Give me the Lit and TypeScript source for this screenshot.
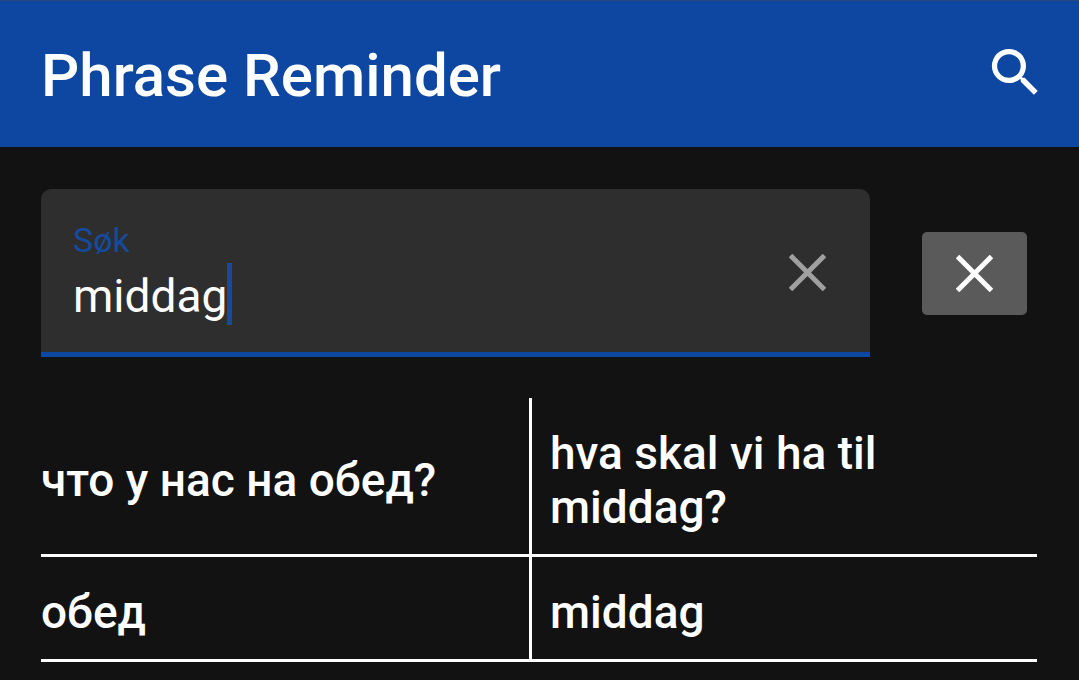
import { LitElement, html, css, svg } from "lit";
import { customElement, property, state } from "lit/decorators.js";

interface Phrase {
  source: string;
  target: string;
}

const crossIcon = svg`<path d="M1.5 1.5 L35.5 35.5 M35.5 1.5 L1.5 35.5" fill="none" stroke="currentColor" stroke-width="5" />`;

@customElement("app-bar")
class AppBar extends LitElement {
  static styles = css`
    :host {
      display: block;
    }
    .bar {
      display: flex;
      align-items: center;
      justify-content: space-between;
      box-sizing: border-box;
      min-height: 147px;
      padding: 0 32px 4px 41px;
      border-top: 1px solid #244b7c;
      background: #0d47a1;
      color: #fff;
    }
    .title {
      margin: 0;
      padding-top: 8px;
      font-size: 60px;
      font-weight: 500;
      line-height: 70px;
    }
    .action {
      display: flex;
      padding: 0;
      border: 0;
      background: none;
      color: inherit;
      cursor: pointer;
    }
    .icon {
      width: 63px;
      height: 63px;
      fill: currentColor;
    }
  `;

  @property() heading = "";

  render() {
    return html`
      <header class="bar">
        <h1 class="title">${this.heading}</h1>
        <button class="action" type="button" aria-label="Søk">
          <svg class="icon" viewBox="0 0 24 24" aria-hidden="true">
            <path
              d="M15.5 14h-.79l-.28-.27A6.471 6.471 0 0 0 16 9.5 6.5 6.5 0 1 0 9.5 16c1.61 0 3.09-.59 4.23-1.57l.27.28v.79l5 4.99L20.49 19l-4.99-5zm-6 0C7.01 14 5 11.99 5 9.5S7.01 5 9.5 5 14 7.01 14 9.5 11.99 14 9.5 14z"
            />
          </svg>
        </button>
      </header>
    `;
  }
}

@customElement("search-field")
class SearchField extends LitElement {
  static styles = css`
    :host {
      display: block;
    }
    .field {
      display: flex;
      align-items: center;
      justify-content: space-between;
      padding: 31px 44px 27px 32px;
      border-bottom: 5px solid #0d47a1;
      border-radius: 10px 10px 0 0;
      background: #2e2e2e;
    }
    .entry {
      display: flex;
      flex-direction: column;
      gap: 3px;
      min-width: 0;
    }
    .label {
      color: #164a9c;
      font-size: 34px;
      line-height: 40px;
    }
    .line {
      display: flex;
    }
    .input {
      field-sizing: content;
      box-sizing: border-box;
      min-width: 1px;
      height: 62px;
      padding: 4px 0 0;
      border: 0;
      outline: 0;
      background: none;
      color: #fff;
      font: inherit;
      font-size: 46px;
      line-height: 58px;
      caret-color: transparent;
    }
    .caret {
      width: 5px;
      background: #164a9c;
    }
    .clear {
      display: flex;
      padding: 0;
      border: 0;
      background: none;
      color: #a0a0a0;
      cursor: pointer;
    }
    .icon {
      width: 37px;
      height: 37px;
    }
  `;

  @property() value = "";

  private emitQuery(value: string) {
    this.dispatchEvent(new CustomEvent("query", { detail: value }));
  }

  render() {
    return html`
      <div class="field">
        <div class="entry">
          <label class="label" for="query">Søk</label>
          <div class="line">
            <input
              class="input"
              id="query"
              type="text"
              autocomplete="off"
              .value=${this.value}
              @input=${(e: Event) => this.emitQuery((e.target as HTMLInputElement).value)}
            />
            <span class="caret"></span>
          </div>
        </div>
        <button class="clear" type="button" aria-label="Tøm" @click=${() => this.emitQuery("")}>
          <svg class="icon" viewBox="0 0 37 37" aria-hidden="true">${crossIcon}</svg>
        </button>
      </div>
    `;
  }
}

@customElement("phrase-table")
class PhraseTable extends LitElement {
  static styles = css`
    :host {
      display: block;
    }
    .table {
      width: 100%;
      table-layout: fixed;
      border-spacing: 0;
      color: #fff;
      font-size: 46px;
      font-weight: 500;
      line-height: 54px;
    }
    .cell {
      padding: 28px 0 20px;
      border-bottom: 3px solid #fff;
      vertical-align: middle;
      text-align: left;
    }
    .source {
      width: 49%;
      box-sizing: border-box;
    }
    .target {
      padding-left: 18px;
      border-left: 3px solid #fff;
    }
  `;

  @property({ attribute: false }) phrases: Phrase[] = [];

  render() {
    return html`
      <table class="table">
        <tbody>
          ${this.phrases.map(
            (p) => html`<tr>
              <td class="cell source">${p.source}</td>
              <td class="cell target">${p.target}</td>
            </tr>`
          )}
        </tbody>
      </table>
    `;
  }
}

@customElement("app-root")
class AppRoot extends LitElement {
  static styles = css`
    :host {
      display: block;
      min-height: 100vh;
      background: #121212;
      font-family: Roboto, "Noto Sans", sans-serif;
    }
    .content {
      display: flex;
      flex-direction: column;
      gap: 41px;
      padding: 42px 42px 18px 41px;
    }
    .search {
      display: flex;
      align-items: center;
      gap: 52px;
      padding-right: 10px;
    }
    .query {
      flex: 1;
      min-width: 0;
    }
    .close {
      display: flex;
      padding: 23px 34px;
      border: 0;
      border-radius: 5px;
      background: #5a5a5a;
      color: #fff;
      cursor: pointer;
    }
    .icon {
      width: 37px;
      height: 37px;
    }
  `;

  @state() private query = "middag";

  private phrases: Phrase[] = [
    { source: "что у нас на обед?", target: "hva skal vi ha til middag?" },
    { source: "обед", target: "middag" },
  ];

  render() {
    const found = this.phrases.filter((p) => (p.source + " " + p.target).includes(this.query));
    return html`
      <app-bar heading="Phrase Reminder"></app-bar>
      <main class="content">
        <div class="search">
          <search-field
            class="query"
            .value=${this.query}
            @query=${(e: CustomEvent<string>) => (this.query = e.detail)}
          ></search-field>
          <button class="close" type="button" aria-label="Lukk">
            <svg class="icon" viewBox="0 0 37 37" aria-hidden="true">${crossIcon}</svg>
          </button>
        </div>
        <phrase-table .phrases=${found}></phrase-table>
      </main>
    `;
  }
}
